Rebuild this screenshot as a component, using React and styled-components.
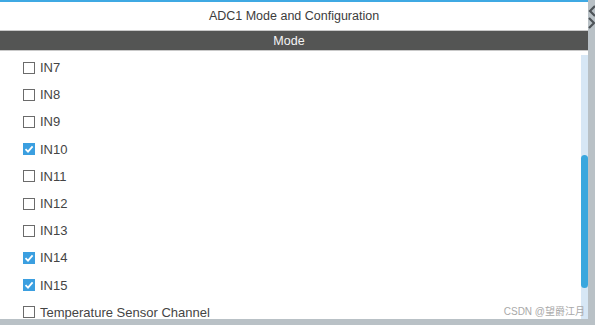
import React from "react";
import styled, { createGlobalStyle } from "styled-components";

const Global = createGlobalStyle`
  html, body { margin: 0; padding: 0; background: #b9c1c6; }
  body { font-family: "Liberation Sans", Arial, sans-serif; }
  #root { width: 595px; height: 325px; overflow: hidden; }
`;

const Frame = styled.div`
  width: 595px;
  height: 325px;
  display: flex;
  flex-direction: column;
  background: #b9c1c6;
  position: relative;
`;

const Body = styled.div`
  display: flex;
  height: 319px;
`;

const Panel = styled.div`
  width: 588px;
  display: flex;
  flex-direction: column;
  background: #ffffff;
  border-top: 2px solid #3fa9e3;
  box-sizing: border-box;
`;

const Title = styled.div`
  height: 28px;
  display: flex;
  align-items: center;
  justify-content: center;
  font-size: 12.5px;
  color: #3c3c3c;
`;

const ModeBar = styled.div`
  height: 19px;
  background: #545554;
  border-top: 1px solid #c9c9c9;
  border-bottom: 1px solid #c9c9c9;
  display: flex;
  align-items: center;
  justify-content: center;
  padding-right: 10px;
  color: #f4f4f4;
  font-size: 12.5px;
`;

const ListArea = styled.div`
  flex: 1;
  display: flex;
  overflow: hidden;
  position: relative;
`;

const List = styled.div`
  flex: 1;
  display: flex;
  flex-direction: column;
  padding-top: 3px;
  padding-left: 23px;
`;

const Row = styled.div`
  height: 27.2px;
  flex: none;
  display: flex;
  align-items: center;
  gap: 5px;
  font-size: 13px;
  color: #444;
`;

const Box = styled.span`
  width: 12px;
  height: 12px;
  box-sizing: border-box;
  border: 1px solid ${p => (p.$checked ? "#3b9fe0" : "#6b6b6b")};
  background: ${p => (p.$checked ? "#3b9fe0" : "#ffffff")};
  display: flex;
  align-items: center;
  justify-content: center;
`;

const Track = styled.div`
  width: 7px;
  margin-top: 4px;
  background: #d7e7f5;
  display: flex;
  flex-direction: column;
  align-items: center;
`;

const Thumb = styled.div`
  width: 7px;
  height: 133px;
  margin-top: 100px;
  border-radius: 4px;
  background: #3aa7de;
`;

const SideStrip = styled.div`
  width: 7px;
  background: #b9c1c6;
  position: relative;
  overflow: hidden;
`;

const Chevron = styled.svg`
  position: absolute;
  left: 0;
  top: 4px;
`;

const BottomStrip = styled.div`
  flex: 1;
  background: #b9c1c6;
`;

const Watermark = styled.div`
  position: absolute;
  right: 10px;
  bottom: 7px;
  font-size: 10px;
  color: #a9a9a9;
  font-family: "Liberation Sans", "Noto Sans CJK SC", sans-serif;
`;

const items = [
  ["IN7", false],
  ["IN8", false],
  ["IN9", false],
  ["IN10", true],
  ["IN11", false],
  ["IN12", false],
  ["IN13", false],
  ["IN14", true],
  ["IN15", true],
  ["Temperature Sensor Channel", false],
];

const Check = () => (
  <svg width="10" height="10" viewBox="0 0 10 10">
    <path d="M1.5 5.2 L4 7.6 L8.6 2.4" stroke="#fff" strokeWidth="1.8" fill="none" />
  </svg>
);

export default function App() {
  return (
    <Frame>
      <Global />
      <Body>
        <Panel>
          <Title>ADC1 Mode and Configuration</Title>
          <ModeBar>Mode</ModeBar>
          <ListArea>
            <List>
              {items.map(([label, checked]) => (
                <Row key={label}>
                  <Box $checked={checked}>{checked && <Check />}</Box>
                  {label}
                </Row>
              ))}
            </List>
            <Track>
              <Thumb />
            </Track>
          </ListArea>
        </Panel>
        <SideStrip>
          <Chevron width="7" height="26" viewBox="0 0 7 26">
            <path d="M7 2 L2 7 L7 12" stroke="#4e5458" strokeWidth="2.2" fill="none" />
            <path d="M1 14 L6 19 L1 24" stroke="#4e5458" strokeWidth="2.2" fill="none" />
          </Chevron>
        </SideStrip>
      </Body>
      <BottomStrip />
      <Watermark>CSDN @望爵江月</Watermark>
    </Frame>
  );
}
